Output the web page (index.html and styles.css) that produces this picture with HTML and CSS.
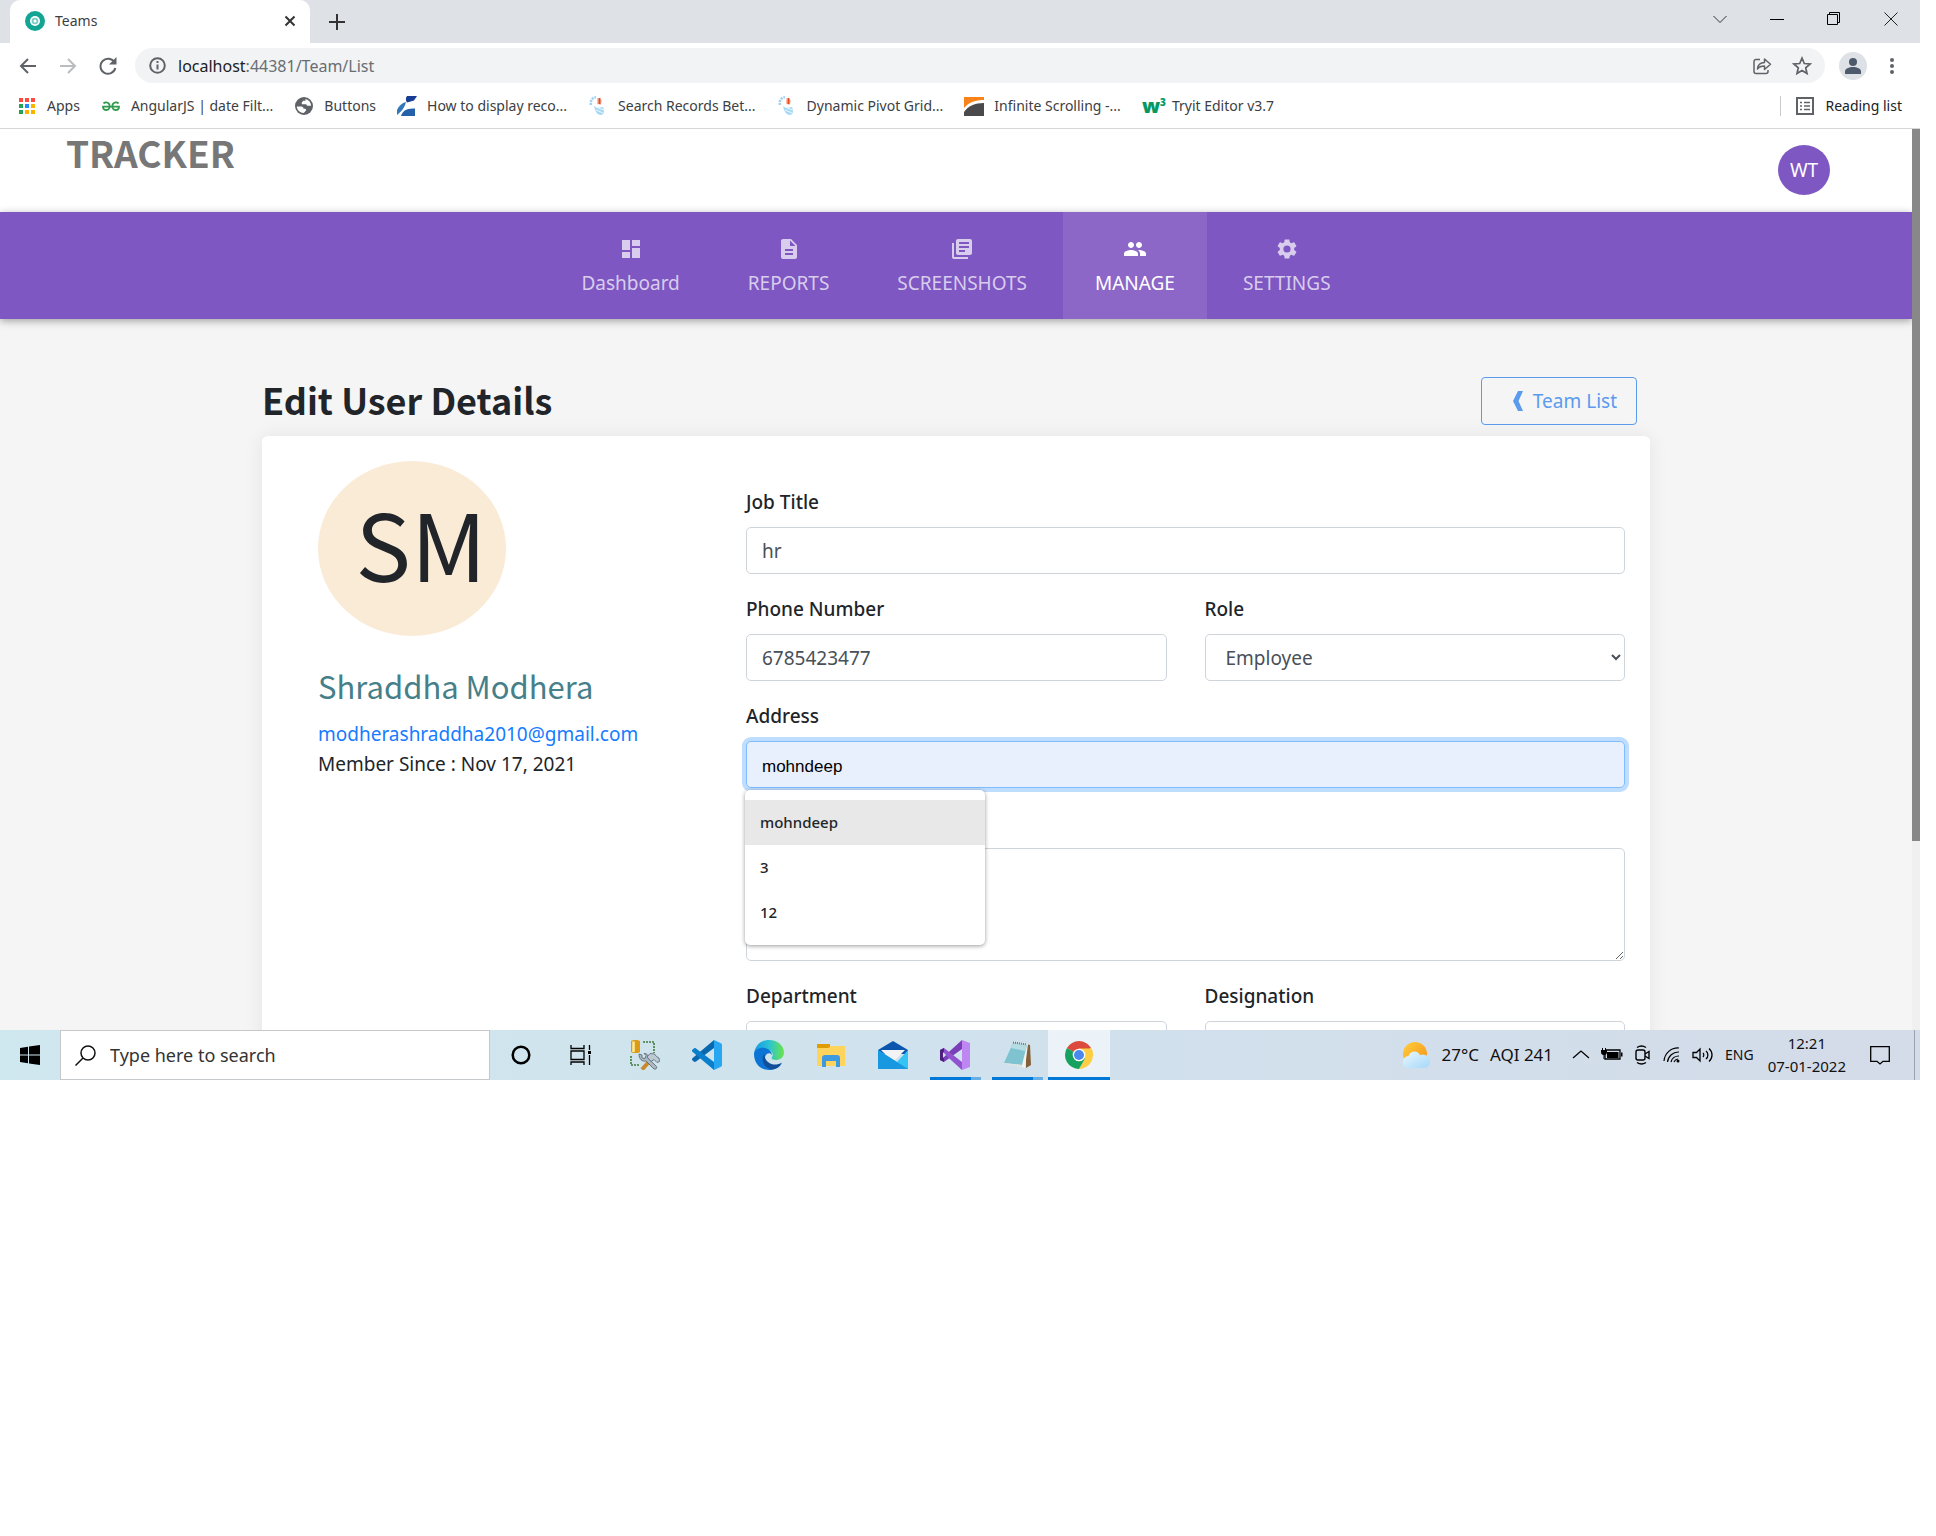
FILE: index.html
```html
<!DOCTYPE html>
<html lang="en">
<head>
<meta charset="utf-8">
<title>Teams</title>
<link rel="stylesheet" href="styles.css">
</head>
<body>
<div class="desktop">

  <header class="browser">
    <div class="tabstrip">
      <div class="tab">
        <svg class="tab-icon" viewBox="0 0 20 20"><circle cx="10" cy="10" r="10" fill="#12a594"/><circle cx="10" cy="10" r="5" fill="#fff"/><circle cx="10" cy="10" r="3.300" fill="#7accc3"/><circle cx="10" cy="10" r="1.500" fill="#fff"/></svg>
        <span class="tab-title">Teams</span>
        <button class="plain tab-close" aria-label="Close tab"><svg width="12" height="12" viewBox="0 0 12 12"><path d="M1.500 1.500l9 9M10.500 1.500l-9 9" stroke="#333" stroke-width="2"/></svg></button>
      </div>
      <button class="plain new-tab" aria-label="New tab"><svg width="16" height="16" viewBox="0 0 16 16"><path d="M8 0v16M0 8h16" stroke="#333" stroke-width="2"/></svg></button>
      <div class="window-controls">
        <button class="plain" aria-label="Search tabs"><svg width="14" height="14" viewBox="0 0 14 14"><path d="M.5 4l6.500 6.500L13.500 4" fill="none" stroke="#333"/></svg></button>
        <button class="plain" aria-label="Minimize"><svg width="14" height="14" viewBox="0 0 14 14"><path d="M0 7.500h14" stroke="#000"/></svg></button>
        <button class="plain" aria-label="Restore"><svg width="14" height="14" viewBox="0 0 14 14"><path d="M.5 2.500h10v10h-10zM2.500 2.500v-2h10v10h-2" fill="none" stroke="#000"/></svg></button>
        <button class="plain" aria-label="Close window"><svg width="14" height="14" viewBox="0 0 14 14"><path d="M.5.500l13 13M13.500.500l-13 13" stroke="#222"/></svg></button>
      </div>
    </div>

    <div class="toolbar">
      <div class="history">
        <button class="plain" aria-label="Back"><svg width="18" height="18" viewBox="0 0 18 18"><path d="M17 9H2M9 2L2 9l7 7" fill="none" stroke="#5f6368" stroke-width="2"/></svg></button>
        <button class="plain" aria-label="Forward"><svg width="18" height="18" viewBox="0 0 18 18"><path d="M1 9h15M9 2l7 7-7 7" fill="none" stroke="#babcbe" stroke-width="2"/></svg></button>
        <button class="plain" aria-label="Reload"><svg width="18" height="18" viewBox="0 0 18 18"><path d="M15.500 5.500A7.500 7.500 0 1 0 16.300 11" fill="none" stroke="#5f6368" stroke-width="2"/><path d="M17.500 0v7.500H10z" fill="#5f6368"/></svg></button>
      </div>
      <div class="omnibox">
        <svg width="17" height="17" viewBox="0 0 17 17"><circle cx="8.500" cy="8.500" r="7.300" fill="none" stroke="#5f6368" stroke-width="2"/><path d="M8.500 7.500v5M8.500 4v2" stroke="#5f6368" stroke-width="2"/></svg>
        <span class="url"><span class="host">localhost</span>:44381/Team/List</span>
        <button class="plain" aria-label="Share"><svg width="20" height="20" viewBox="0 0 20 20" fill="none" stroke="#5f6368" stroke-width="1.500"><path d="M8 3.500H4a2 2 0 0 0-2 2v10a2 2 0 0 0 2 2h10a2 2 0 0 0 2-2v-1.500"/><path d="M5.500 13c.3-4.200 2.500-6.200 7-6.400V3l6 5.300-6 5.200V10c-3.500 0-5.500.8-7 3z" stroke-linejoin="round"/></svg></button>
        <button class="plain" aria-label="Bookmark this tab"><svg width="20" height="20" viewBox="0 0 20 20"><path d="M10 2.200l2.300 5.300 5.800.5-4.400 3.800 1.300 5.700-5-3-5 3 1.300-5.700L1.900 8l5.800-.5z" fill="none" stroke="#5f6368" stroke-width="1.700"/></svg></button>
      </div>
      <button class="plain profile" aria-label="Profile"><svg width="18" height="18" viewBox="0 0 18 18" fill="#4d5a6c"><circle cx="9" cy="5" r="4"/><path d="M1 17v-2.500c0-3 4-4.500 8-4.500s8 1.500 8 4.500V17z"/></svg></button>
      <button class="plain menu" aria-label="Menu"><svg width="4" height="18" viewBox="0 0 4 18" fill="#5f6368"><circle cx="2" cy="3" r="2"/><circle cx="2" cy="9" r="2"/><circle cx="2" cy="15" r="2"/></svg></button>
    </div>

    <nav class="bookmarks" aria-label="Bookmarks">
      <a href="#"><svg width="20" height="20" viewBox="0 0 20 20"><path fill="#ff4a3d" d="M2 2h4v4H2zM8 2h4v4H8zM14 2h4v4h-4z"/><path fill="#23a455" d="M2 8h4v4H2zM2 14h4v4H2z"/><path fill="#1f8df5" d="M8 8h4v4H8z"/><path fill="#fbb300" d="M14 8h4v4h-4zM8 14h4v4H8zM14 14h4v4h-4z"/></svg>Apps</a>
      <a href="#"><svg width="20" height="20" viewBox="0 0 20 20" fill="none" stroke="#2f9b4e" stroke-width="1.800"><path d="M2.500 7.500C4 6 7 6 8.300 8.300c1 2.200.2 5.700-2.800 5.700-2.500 0-3.500-1.500-3.500-3.300h16c0 1.800-1 3.300-3.500 3.300-3 0-3.800-3.500-2.800-5.700C13 6 16 6 17.500 7.500"/></svg>AngularJS | date Filt...</a>
      <a href="#"><svg width="20" height="20" viewBox="0 0 20 20"><circle cx="10" cy="10" r="9" fill="#5f6368"/><path d="M2.800 10.500h4.500c1.500 0 2.200 1 2.200 2.200h1.500c1 0 1.500 1 .8 2L9.800 17c-4-.2-6.800-3-7-6.500zM11.500 3c3.500.8 5.500 3.500 5.600 6.800h-3c-1 0-1.500-.7-1.800-1.600H8.700c-1 0-1.300-1-.8-1.800l1.200-1.700h2.400z" fill="#fff"/></svg>Buttons</a>
      <a href="#"><svg width="20" height="20" viewBox="0 0 20 20"><path d="M10 0h10l-3 4.500-7 2c-1.500-2-1.500-4.500 0-6.500z" fill="#173d94"/><path d="M0 19v-5C2 9.500 5 7 9 6c-1 5-4 9-9 13z" fill="#3277ba"/><path d="M4 20c1.500-5 5-8 14-7.500V20z" fill="#2561a8"/></svg>How to display reco...</a>
      <a href="#"><svg width="20" height="20" viewBox="0 0 20 20"><path d="M3 9C2 4 5 1 8 1.500" fill="none" stroke="#9bd0f5" stroke-width="2.500" stroke-dasharray="2 1"/><path d="M9 2l5 2-1 5-4-1z" fill="#f9c3af"/><path d="M10.500 2h2v6h-2z" fill="#e54a25"/><path d="M6 10l3 2 6-1c2 4 1 8-2 8-4 0-6-4-7-9z" fill="#a6d9f6"/><path d="M8 14l7 3M10 12l6 2" stroke="#e9f6fd"/></svg>Search Records Bet...</a>
      <a href="#"><svg width="20" height="20" viewBox="0 0 20 20"><path d="M3 9C2 4 5 1 8 1.500" fill="none" stroke="#9bd0f5" stroke-width="2.500" stroke-dasharray="2 1"/><path d="M9 2l5 2-1 5-4-1z" fill="#f9c3af"/><path d="M10.500 2h2v6h-2z" fill="#e54a25"/><path d="M6 10l3 2 6-1c2 4 1 8-2 8-4 0-6-4-7-9z" fill="#a6d9f6"/><path d="M8 14l7 3M10 12l6 2" stroke="#e9f6fd"/></svg>Dynamic Pivot Grid...</a>
      <a href="#"><svg width="20" height="20" viewBox="0 0 20 20"><path d="M0 1h20v3C12 4 5 6 0 12z" fill="#f98319"/><path d="M20 7v13H0v-4C4 10 11 7 20 7z" fill="#4a4a4c"/></svg>Infinite Scrolling -...</a>
      <a href="#"><span class="w3">w<sup>3</sup></span>Tryit Editor v3.7</a>
      <a href="#" class="reading"><svg width="20" height="20" viewBox="0 0 20 20"><path d="M2 2h16v16H2z" fill="none" stroke="#5f6368" stroke-width="2"/><path d="M5 6.500h2m2 0h6M5 10h2m2 0h6M5 13.500h2m2 0h6" stroke="#5f6368" stroke-width="1.600"/></svg>Reading list</a>
    </nav>
  </header>

  <div class="viewport">
    <div class="page">
      <header class="site-header">
        <div class="brand">TRACKER</div>
        <button class="user-badge">WT</button>
      </header>

      <nav class="main-nav" aria-label="Main">
        <a href="#"><svg viewBox="0 0 24 24"><path d="M3 13h8V3H3zm0 8h8v-6H3zm10 0h8V11h-8zm0-18v6h8V3z"/></svg>Dashboard</a>
        <a href="#"><svg viewBox="0 0 24 24"><path d="M14 2H6c-1.100 0-2 .9-2 2v16c0 1.100.9 2 2 2h12c1.100 0 2-.9 2-2V8zm2 16H8v-2h8zm0-4H8v-2h8zm-3-5V3.500L18.500 9z"/></svg>REPORTS</a>
        <a href="#"><svg viewBox="0 0 24 24"><path d="M4 6H2v14c0 1.100.9 2 2 2h14v-2H4zm16-4H8c-1.100 0-2 .9-2 2v12c0 1.100.9 2 2 2h12c1.100 0 2-.9 2-2V4c0-1.100-.9-2-2-2zm-1 9H9V9h10zm-4 4H9v-2h6zm4-8H9V5h10z"/></svg>SCREENSHOTS</a>
        <a href="#" class="active" aria-current="page"><svg viewBox="0 0 24 24"><path d="M16 11c1.660 0 2.990-1.340 2.990-3S17.660 5 16 5s-3 1.340-3 3 1.340 3 3 3zm-8 0c1.660 0 2.990-1.340 2.990-3S9.660 5 8 5 5 6.340 5 8s1.340 3 3 3zm0 2c-2.330 0-7 1.170-7 3.500V19h14v-2.500C15 14.170 10.330 13 8 13zm8 0c-.29 0-.62.020-.97.050 1.160.84 1.970 1.970 1.970 3.450V19h6v-2.500c0-2.330-4.670-3.500-7-3.500z"/></svg>MANAGE</a>
        <a href="#"><svg viewBox="0 0 24 24"><path d="M19.140 12.940c.04-.3.060-.61.060-.94s-.02-.64-.07-.94l2.030-1.580a.49.49 0 0 0 .12-.61l-1.920-3.320a.49.49 0 0 0-.59-.22l-2.390.96a7 7 0 0 0-1.620-.94l-.36-2.540A.48.48 0 0 0 13.920 2.400h-3.840a.47.47 0 0 0-.47.410l-.36 2.540c-.59.240-1.130.570-1.620.940l-2.390-.96a.47.47 0 0 0-.59.220L2.740 8.870a.47.47 0 0 0 .12.610l2.030 1.580a6 6 0 0 0 0 1.880l-2.030 1.580a.49.49 0 0 0-.12.610l1.920 3.320c.12.220.37.290.59.220l2.390-.96c.5.380 1.030.7 1.620.94l.36 2.540c.05.240.24.410.48.410h3.840c.24 0 .44-.17.470-.41l.36-2.540a7 7 0 0 0 1.620-.94l2.390.96c.22.080.47 0 .59-.22l1.920-3.320a.47.47 0 0 0-.12-.61zM12 15.600A3.600 3.600 0 1 1 12 8.400a3.600 3.600 0 0 1 0 7.200z"/></svg>SETTINGS</a>
      </nav>

      <main class="content">
        <div class="title-row">
          <h1>Edit User Details</h1>
          <button class="back-button"><svg width="10" height="20" viewBox="0 0 10 20"><path d="M5 0h5L5.500 10 10 20H5L0 10z" fill="#5a9bee"/></svg>Team List</button>
        </div>

        <section class="card">
          <aside class="person">
            <div class="avatar">SM</div>
            <h2>Shraddha Modhera</h2>
            <a href="#">modherashraddha2010@gmail.com</a>
            <p>Member Since : Nov 17, 2021</p>
          </aside>

          <form class="form">
            <div class="field wide">
              <label for="job">Job Title</label>
              <input id="job" type="text" value="hr">
            </div>
            <div class="field">
              <label for="phone">Phone Number</label>
              <input id="phone" type="text" value="6785423477">
            </div>
            <div class="field">
              <label for="role">Role</label>
              <select id="role"><option>Employee</option></select>
            </div>
            <div class="field wide address">
              <label for="address">Address</label>
              <input id="address" class="focused" type="text" value="mohndeep">
              <ul class="suggestions">
                <li class="selected">mohndeep</li>
                <li>3</li>
                <li>12</li>
              </ul>
            </div>
            <div class="field wide unlabelled">
              <textarea aria-label="About"></textarea>
            </div>
            <div class="field">
              <label for="department">Department</label>
              <input id="department" type="text">
            </div>
            <div class="field">
              <label for="designation">Designation</label>
              <input id="designation" type="text">
            </div>
          </form>
        </section>
      </main>
    </div>
    <div class="scrollbar"><div class="thumb"></div></div>
  </div>

  <footer class="taskbar">
    <button class="plain start" aria-label="Start"><svg width="20" height="20" viewBox="0 0 20 20"><path d="M0 3l8-1.200v7.700H0zM9 1.600L20 0v9.500H9zM0 10.500h8v7.700L0 17zM9 10.500h11V20L9 18.400z"/></svg></button>
    <label class="search">
      <svg width="21" height="21" viewBox="0 0 21 21"><circle cx="13" cy="8" r="7" fill="none" stroke="#111" stroke-width="1.500"/><path d="M8 13L.5 20.500" stroke="#111" stroke-width="1.500"/></svg>
      <input type="text" placeholder="Type here to search" aria-label="Search">
    </label>
    <div class="apps">
      <button class="plain" aria-label="Cortana"><svg width="20" height="20" viewBox="0 0 20 20"><circle cx="10" cy="10" r="8.300" fill="none" stroke="#000" stroke-width="2.500"/></svg></button>
      <button class="plain task-view" aria-label="Task View"><svg width="22" height="20" viewBox="0 0 22 20" fill="none" stroke="#000" stroke-width="1.300"><path d="M1 0v3.500h13V0M1 6h13v8.500H1zM1 20v-3h13v3M19.500 0v5M19.500 10v10"/><path d="M18 6h3v3h-3z" fill="#000" stroke="none"/></svg></button>
      <button class="plain" aria-label="SQL Server Management Studio"><svg width="30" height="30" viewBox="0 0 30 30"><path d="M13 2h11v11M1 16v9h9" fill="none" stroke="#3d7a3c" stroke-width="1.600" stroke-dasharray="2 1"/><path d="M1 1.500c0-2 9-2 9 0v10c0 2-9 2-9 0z" fill="#dc9a16"/><path d="M3.500 1.500v10.500" stroke="#ffeb9c" stroke-width="2.500"/><path d="M12 29.500l9-10" stroke="#c98a2c" stroke-width="4"/><path d="M9 14l3 1v3l3 .5 1-3-2-2c3 0 5 2 4.500 5l8 8c1 2-1 3-2.500 2.500l-8-8c-4 1-7-2-7-7z" fill="#a9b8c3" stroke="#55626c" stroke-width=".8"/><path d="M17 17l3-3.500 4.500.5 2 2.500 2.500 1.500.5 3.500-2.500 1-3-3-3 2z" fill="#bccad3" stroke="#55626c" stroke-width=".8"/></svg></button>
      <button class="plain" aria-label="Visual Studio Code"><svg width="30" height="30" viewBox="0 0 30 30"><path d="M22 0v8L4 21.500c-1 .7-2 .3-2.500-.2L.4 20.300c-.6-.6-.5-1.400 0-2z" fill="#0869b0"/><path d="M.4 11.700c-.5-.6-.6-1.400 0-2l1.100-1c.5-.5 1.500-.9 2.500-.2L22 22v8z" fill="#0a7fcb"/><path d="M22 0l7 3.300c.7.400 1 1 1 1.700v20c0 .7-.3 1.300-1 1.700L22 30z" fill="#27a6f2"/></svg></button>
      <button class="plain" aria-label="Microsoft Edge"><svg width="30" height="30" viewBox="0 0 30 30"><defs><linearGradient id="edgeTop"><stop offset="0" stop-color="#1699e5"/><stop offset=".5" stop-color="#2bc2d5"/><stop offset="1" stop-color="#6ae549"/></linearGradient></defs><path d="M0 14C1 5 7 0 15 0c9 0 15 6 15 12.500 0 5-4 7.500-8 7.500-4 0-5-1.500-4-3 2-4-1-7-5-7-5 0-10 1-13 4z" fill="url(#edgeTop)"/><path d="M0 14c1-5 6-7 11-6 4 1 7 4 7 7-2-3-6-2-7 2-1 6 4 9 9 9 4 0 7-1 8-3-3 5-8 7-13 7C6 30 0 23 0 14z" fill="#0c74d4"/><path d="M10 14c-4 7 1 15 9 15.500 4-1 7-3 9-7-8 5-16 0-17-5z" fill="#104f99"/></svg></button>
      <button class="plain" aria-label="File Explorer"><svg width="28" height="24" viewBox="0 0 28 24"><path d="M0 1h11l2 2h15v20H0z" fill="#ffd45c"/><path d="M0 1h13v3l-2 1H0z" fill="#e19c05"/><path d="M5 24V15c0-2 1-3 3-3h12c2 0 3 1 3 3v9h-4v-6H9v6z" fill="#3d9ae0"/></svg></button>
      <button class="plain" aria-label="Mail"><svg width="30" height="30" viewBox="0 0 30 30"><path d="M0 10L15 1l15 9v4H0z" fill="#0a55ae"/><path d="M3 10h24l-12 12z" fill="#f3f3f6"/><path d="M0 10l19 12 11-12v19H0z" fill="#35c3f4"/><path d="M0 10l30 19H0z" fill="#1998e2"/></svg></button>
      <button class="plain open" aria-label="Visual Studio"><svg width="30" height="30" viewBox="0 0 30 30"><path d="M22 0v9L4 22l-4-2L22 0z" fill="#7a3fb8"/><path d="M0 10l4-2 18 14v8z" fill="#9152cf"/><path d="M22 0l8 3v24l-8 3z" fill="#bd86f3"/><path d="M0 10l4-2v14l-4-2z" fill="#4c207c"/><path d="M3 12v6l3-3z" fill="#cfe3ec"/></svg></button>
      <button class="plain open" aria-label="Notepad"><svg width="30" height="30" viewBox="0 0 30 30"><path d="M24 4l4 1 1 20-5 3z" fill="#84613b"/><path d="M12 3l14 1-3 24-6-2z" fill="#f3f3ee"/><path d="M11 3l14 2-5 20L2 23z" fill="#7fc3d1"/><path d="M11 3l14 2-2 6-14-3z" fill="#b5dee4"/><path d="M2 23l18 2v3L2 24z" fill="#dbe5e6"/><path d="M11 2.500l14 2" stroke="#77777a" stroke-width="2" stroke-dasharray="1 1"/></svg></button>
      <button class="plain current" aria-label="Google Chrome"><svg width="28" height="28" viewBox="0 0 28 28"><path d="M14 14L1.900 7A14 14 0 0 1 26.100 7z" fill="#db4a3d"/><path d="M14 14h0L26.100 7A14 14 0 0 1 14 28l6-10.500z" fill="#fdce44"/><path d="M14 14l6 3.500L14 28A14 14 0 0 1 1.900 7z" fill="#16a15e"/><path d="M14 7.500h12.400c.9 2 1.500 4 1.500 6.500L20 18z" fill="#fdce44"/><circle cx="14" cy="14" r="6.300" fill="#fff"/><circle cx="14" cy="14" r="5" fill="#4a88ee"/></svg></button>
    </div>
    <div class="tray">
      <button class="plain weather"><svg width="28" height="26" viewBox="0 0 28 26"><defs><linearGradient id="sun" x2="1" y2="1"><stop offset="0" stop-color="#ffcf3e"/><stop offset="1" stop-color="#f78f12"/></linearGradient><linearGradient id="cloud" x2="1" y2="1"><stop offset="0" stop-color="#eaf7ff"/><stop offset="1" stop-color="#a4d8f8"/></linearGradient></defs><circle cx="13" cy="12" r="12" fill="url(#sun)"/><path d="M7 26a6 6 0 0 1-.5-12C8 9 15 7.500 18 13c5-2 10 1.500 10 6.500 0 4-3 6.500-6.500 6.500z" fill="url(#cloud)"/></svg><span>27°C</span><span>AQI 241</span></button>
      <div class="status">
        <svg width="18" height="20" viewBox="0 0 18 20"><path d="M1 13l8-7 8 7" fill="none" stroke="#000" stroke-width="1.300"/></svg>
        <svg width="22" height="20" viewBox="0 0 22 20"><path d="M5 5h14v9H4V9" fill="none" stroke="#000" stroke-width="1.300"/><path d="M6 7h11.500v6H6zM20 7.500h1.500v4H20zM0 5h6v2c0 2-1 3-2.500 3v4h-1v-4C1 10 0 9 0 7zM1 3h1v2H1zM4 3h1v2H4z"/></svg>
        <svg width="18" height="20" viewBox="0 0 18 20" fill="none" stroke="#000" stroke-width="1.400"><rect x="2" y="5" width="9" height="10" rx="2"/><path d="M11 9l4-2.500v7L11 11M3 2.500c3-2 6-2 9 0M3 17.500c3 2 6 2 9 0"/></svg>
        <svg width="18" height="20" viewBox="0 0 18 20" fill="none" stroke="#000" stroke-width="1.200"><path d="M1 16A14 14 0 0 1 16 3M4.500 17A11 11 0 0 1 16 7M8 17a8 8 0 0 1 8-6M11 17a5 5 0 0 1 4-3"/><circle cx="15" cy="16" r="1.500" fill="#000" stroke="none"/></svg>
        <svg width="22" height="20" viewBox="0 0 22 20" fill="none" stroke="#000" stroke-width="1.300"><path d="M1 7.500h3.500L8 4v12l-3.500-3.500H1zM11 8c1 1 1 3 0 4M14 6c2.500 2 2.500 6 0 8M17 3.500c4 3.500 4 9.500 0 13"/></svg>
        <span>ENG</span>
      </div>
      <button class="plain clock"><span>12:21</span><span>07-01-2022</span></button>
      <button class="plain notifications" aria-label="Notifications"><svg width="20" height="22" viewBox="0 0 20 22"><path d="M.7 2.700h18.600V17.300H13L10 20l-3-2.700H.7z" fill="none" stroke="#000" stroke-width="1.300"/></svg></button>
    </div>
  </footer>
</div>
</body>
</html>
```
FILE: styles.css
```css
:root {
  --ui: "Noto Sans", "Open Sans", sans-serif;
  --display: "Noto Sans CJK JP", "Noto Sans", sans-serif;
  --purple: #7e57c2;
  --ink: #212529;
}

* { box-sizing: border-box; }

body {
  margin: 0;
  padding-right: 16px;
  background: #fff;
  color: var(--ink);
  font: 19px/30px var(--ui);
}

a { color: inherit; text-decoration: none; }
svg { display: block; flex: none; }
h1, h2, p, ul { margin: 0; padding: 0; }
button, input, select, textarea { font: inherit; color: inherit; }

.plain {
  display: flex;
  align-items: center;
  justify-content: center;
  padding: 0;
  border: 0;
  background: none;
}

.desktop {
  display: flex;
  flex-direction: column;
  aspect-ratio: 16 / 9;
  min-height: 0;
  overflow: hidden;
}

/* Browser chrome */
.browser {
  flex: none;
  border-bottom: 1px solid #d5d7d9;
  font-size: 14px;
  line-height: 20px;
  color: #3c4043;
}

.tabstrip {
  display: flex;
  height: 43px;
  padding: 0 1px 0 10px;
  background: #dee1e6;
}

.tab {
  display: flex;
  align-items: center;
  gap: 10px;
  width: 300px;
  padding: 0 14px 2px 15px;
  border-radius: 10px 10px 0 0;
  background: #fff;
}

.tab-icon { width: 20px; height: 20px; }
.tab-title { flex: 1; }
.new-tab { width: 54px; }
.window-controls { display: flex; margin-left: auto; height: 38px; }
.window-controls button { width: 57px; }

.toolbar {
  display: flex;
  align-items: center;
  height: 45px;
  padding: 0 8px;
}

.history { display: flex; }
.history button { width: 40px; height: 36px; }

.omnibox {
  flex: 1;
  display: flex;
  align-items: center;
  gap: 12px;
  height: 35px;
  margin-left: 7px;
  padding: 0 13px 0 14px;
  border-radius: 18px;
  background: #f1f3f4;
}

.url { flex: 1; font-size: 16px; color: #6a6e73; }
.host { color: #202124; }
.omnibox .plain { margin-left: 8px; }

.profile {
  width: 28px;
  height: 28px;
  margin-left: 14px;
  border-radius: 50%;
  background: #dee1e6;
}

.menu { width: 20px; margin: 0 10px 0 15px; }

.bookmarks {
  display: flex;
  gap: 21px;
  height: 40px;
  padding: 0 18px 4px 17px;
}

.bookmarks a { display: flex; align-items: center; gap: 10px; white-space: nowrap; }

.bookmarks .reading {
  align-self: center;
  margin-left: auto;
  padding-left: 14px;
  border-left: 1px solid #c8cacd;
  color: #202124;
}

.w3 {
  display: flex;
  width: 20px;
  font-size: 20px;
  font-weight: 900;
  color: #059862;
}
.w3 sup { font-size: 10px; line-height: 12px; }

/* Page area */
.viewport { flex: 1; min-height: 0; display: flex; }
.page { flex: 1; background: #f5f5f5; }
.scrollbar { width: 8px; background: #f0f0f0; }
.thumb { height: 79%; background: #888; }

.site-header {
  display: flex;
  align-items: flex-start;
  justify-content: space-between;
  height: 83px;
  padding: 0 82px 0 66px;
}

.site-header { background: #fff; }

.brand {
  color: #777;
  font: 700 37px/46px var(--display);
}

.user-badge {
  width: 52px;
  height: 50px;
  margin-top: 16px;
  padding: 0;
  border: 0;
  border-radius: 50%;
  background: var(--purple);
  color: #fff;
}

.main-nav {
  display: flex;
  justify-content: center;
  gap: 4px;
  background: var(--purple);
  box-shadow: 0 2px 8px rgba(0, 0, 0, .35);
}

.main-nav a {
  display: flex;
  flex-direction: column;
  align-items: center;
  gap: 7px;
  padding: 25px 32px 21px;
  color: #d8cdec;
}

.main-nav svg { width: 24px; height: 24px; fill: currentColor; }
.main-nav .active { background: #8c67c8; color: #fff; }

.content {
  max-width: 1388px;
  margin: 0 auto;
  padding-top: 58px;
}

.title-row {
  display: flex;
  align-items: flex-start;
  justify-content: space-between;
  margin-bottom: 11px;
  padding-right: 13px;
}

h1 { font: 700 36px/44px var(--display); }

.back-button {
  display: flex;
  align-items: center;
  gap: 10px;
  height: 48px;
  padding: 0 19px 0 31px;
  border: 1px solid #5a9bee;
  border-radius: 4px;
  background: transparent;
  color: #5a9bee;
}

.card {
  display: flex;
  padding: 25px 25px 30px 56px;
  border-radius: 6px;
  background: #fff;
  box-shadow: 0 0 20px rgba(0, 0, 0, .07);
}

.person { width: 428px; }

.avatar {
  width: 188px;
  height: 175px;
  padding-left: 18px;
  border-radius: 50%;
  background: #faebd7;
  font: 400 93px/161px var(--display);
  text-align: center;
}

.person h2 {
  margin: 26px 0 9px;
  color: #467f8a;
  font: 400 31px/48px var(--display);
}

.person a { color: #157bff; }

.form {
  flex: 1;
  display: grid;
  grid-template-columns: 1fr 1fr;
  gap: 20px 38px;
  padding-top: 26px;
}

.field { display: flex; flex-direction: column; gap: 10px; }
.wide { grid-column: 1 / -1; }
.unlabelled { padding-top: 40px; }
.form label { font-weight: 500; }

.form input,
.form select,
.form textarea {
  width: 100%;
  height: 47px;
  padding: 0 15px;
  border: 1px solid #ced4da;
  border-radius: 5px;
  outline: 0;
  background: #fff;
  color: #495057;
}

.form select { padding: 0 16px; }
.form textarea { height: 113px; resize: vertical; }

.form .focused {
  padding-top: 5px;
  border-color: #80bdff;
  background: #e8f0fe;
  box-shadow: 0 0 0 4px #bfdeff;
  color: #000;
  font: 17px/24px "Liberation Sans", sans-serif;
}

.address { position: relative; }

.suggestions {
  position: absolute;
  z-index: 1;
  top: 89px;
  left: -1px;
  width: 240px;
  padding: 10px 0;
  border-radius: 5px;
  background: #fff;
  box-shadow: 0 1px 4px rgba(0, 0, 0, .4);
  list-style: none;
  font-size: 15px;
  font-weight: 500;
  line-height: 45px;
}

.suggestions li { padding: 0 15px; }
.suggestions .selected { background: #e8e8e8; }

/* Taskbar */
.taskbar {
  position: relative;
  z-index: 2;
  flex: none;
  display: flex;
  height: 50px;
  background: linear-gradient(90deg, #cfe7ee, #d0e2ed 50%, #d4dbe9);
  color: #111;
}

.start { width: 60px; }

.search {
  display: flex;
  align-items: center;
  gap: 14px;
  width: 430px;
  padding: 0 14px;
  border: 1px solid #c5c9cc;
  background: #fff;
  font-size: 18px;
}

.search input { flex: 1; padding: 0; border: 0; outline: 0; background: none; }
.search input::placeholder { color: #333; }

.apps { display: flex; }
.apps button { width: 62px; }
.apps .task-view { padding-right: 4px; }
.apps .open {
  border-bottom: 3px solid transparent;
  background: linear-gradient(90deg, transparent 6px, #0078d7 6px 47px, #66aee7 47px 57px, transparent 57px) 0 100% / 100% 3px no-repeat border-box;
}
.apps .open, .apps .current { padding-top: 3px; }
.apps .current { border-bottom: 3px solid #0078d7; background: #ecf3f8; }

.tray {
  display: flex;
  align-items: center;
  margin-left: auto;
  padding-right: 5px;
}

.weather { gap: 11px; font-size: 17px; }
.status {
  display: flex;
  align-items: center;
  gap: 11px;
  margin-left: 19px;
  font-size: 14px;
}
.clock {
  flex-direction: column;
  margin-left: 14px;
  font-size: 15px;
  line-height: 23px;
}
.notifications { width: 69px; height: 50px; border-right: 1px solid #9aa3b2; }
```
